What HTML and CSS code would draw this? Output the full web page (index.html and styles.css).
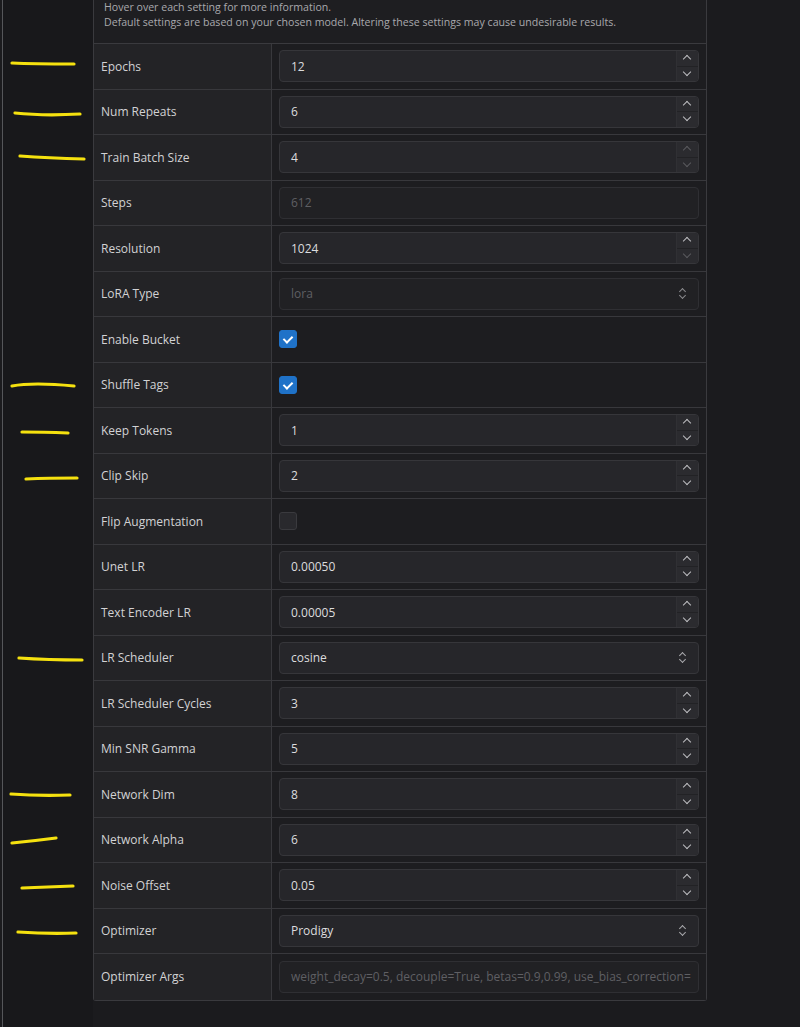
FILE: index.html
```html
<!DOCTYPE html>
<html lang="en">
<head>
    <meta charset="UTF-8">
    <title>Training Settings</title>
    <link rel="stylesheet" href="styles.css">
</head>
<body>
    <div class="page">
        <div class="gutter">
            <!-- hand drawn highlight marks -->
            <svg width="90" height="1027" viewBox="0 0 90 1027">
                <g fill="none" stroke="#f5e10f" stroke-width="3.2" stroke-linecap="round">
                    <path d="M9 63 Q30 64 71 64"/>
                    <path d="M12 113 Q40 116 77 114"/>
                    <path d="M17 156 Q45 158 81 159"/>
                    <path d="M9 386 Q30 382 71 386"/>
                    <path d="M19 432 Q40 432 65 433"/>
                    <path d="M23 479 Q45 478 74 478"/>
                    <path d="M16 658 Q45 660 79 660"/>
                    <path d="M8 794 Q35 796 67 795"/>
                    <path d="M9 843 Q30 841 53 838"/>
                    <path d="M19 888 Q45 887 70 886"/>
                    <path d="M15 932 Q45 934 73 933"/>
                </g>
            </svg>
        </div>
        <div class="panel">
            <div class="intro">
                <p>Hover over each setting for more information.</p>
                <p>Default settings are based on your chosen model. Altering these settings may cause undesirable results.</p>
            </div>
            <div class="rows">
                <div class="row">
                    <div class="label">Epochs</div>
                    <div class="value"><div class="field"><span class="text">12</span><div class="spin"><span class="up"></span><span class="down"></span></div></div></div>
                </div>
                <div class="row">
                    <div class="label">Num Repeats</div>
                    <div class="value"><div class="field"><span class="text">6</span><div class="spin"><span class="up"></span><span class="down"></span></div></div></div>
                </div>
                <div class="row">
                    <div class="label">Train Batch Size</div>
                    <div class="value"><div class="field"><span class="text">4</span><div class="spin"><span class="up dim"></span><span class="down dim"></span></div></div></div>
                </div>
                <div class="row">
                    <div class="label">Steps</div>
                    <div class="value"><div class="field disabled"><span class="text">612</span></div></div>
                </div>
                <div class="row">
                    <div class="label">Resolution</div>
                    <div class="value"><div class="field"><span class="text">1024</span><div class="spin"><span class="up"></span><span class="down dim"></span></div></div></div>
                </div>
                <div class="row">
                    <div class="label">LoRA Type</div>
                    <div class="value"><div class="field disabled select"><span class="text">lora</span><span class="caret"></span></div></div>
                </div>
                <div class="row">
                    <div class="label">Enable Bucket</div>
                    <div class="value"><span class="check on"></span></div>
                </div>
                <div class="row">
                    <div class="label">Shuffle Tags</div>
                    <div class="value"><span class="check on"></span></div>
                </div>
                <div class="row">
                    <div class="label">Keep Tokens</div>
                    <div class="value"><div class="field"><span class="text">1</span><div class="spin"><span class="up"></span><span class="down"></span></div></div></div>
                </div>
                <div class="row">
                    <div class="label">Clip Skip</div>
                    <div class="value"><div class="field"><span class="text">2</span><div class="spin"><span class="up"></span><span class="down"></span></div></div></div>
                </div>
                <div class="row">
                    <div class="label">Flip Augmentation</div>
                    <div class="value"><span class="check"></span></div>
                </div>
                <div class="row">
                    <div class="label">Unet LR</div>
                    <div class="value"><div class="field"><span class="text">0.00050</span><div class="spin"><span class="up"></span><span class="down"></span></div></div></div>
                </div>
                <div class="row">
                    <div class="label">Text Encoder LR</div>
                    <div class="value"><div class="field"><span class="text">0.00005</span><div class="spin"><span class="up"></span><span class="down"></span></div></div></div>
                </div>
                <div class="row">
                    <div class="label">LR Scheduler</div>
                    <div class="value"><div class="field select"><span class="text">cosine</span><span class="caret"></span></div></div>
                </div>
                <div class="row">
                    <div class="label">LR Scheduler Cycles</div>
                    <div class="value"><div class="field"><span class="text">3</span><div class="spin"><span class="up"></span><span class="down"></span></div></div></div>
                </div>
                <div class="row">
                    <div class="label">Min SNR Gamma</div>
                    <div class="value"><div class="field"><span class="text">5</span><div class="spin"><span class="up"></span><span class="down"></span></div></div></div>
                </div>
                <div class="row">
                    <div class="label">Network Dim</div>
                    <div class="value"><div class="field"><span class="text">8</span><div class="spin"><span class="up"></span><span class="down"></span></div></div></div>
                </div>
                <div class="row">
                    <div class="label">Network Alpha</div>
                    <div class="value"><div class="field"><span class="text">6</span><div class="spin"><span class="up"></span><span class="down"></span></div></div></div>
                </div>
                <div class="row">
                    <div class="label">Noise Offset</div>
                    <div class="value"><div class="field"><span class="text">0.05</span><div class="spin"><span class="up"></span><span class="down"></span></div></div></div>
                </div>
                <div class="row">
                    <div class="label">Optimizer</div>
                    <div class="value"><div class="field select"><span class="text">Prodigy</span><span class="caret"></span></div></div>
                </div>
                <div class="row">
                    <div class="label">Optimizer Args</div>
                    <div class="value"><div class="field disabled"><span class="text">weight_decay=0.5, decouple=True, betas=0.9,0.99, use_bias_correction=</span></div></div>
                </div>
            </div>
        </div>
        <div class="side"></div>
    </div>
</body>
</html>
```

FILE: styles.css
```css
body {
    margin: 0;
    background-color: #1b1b1e;
    font-family: "Open Sans", "Noto Sans", Arial, sans-serif;
    color: #d4d4d6;
}

.page {
    display: flex;
    height: 1027px;
    border-left: 1px solid #55565a;
    margin-left: 2px;
    overflow: hidden;
}

.gutter {
    width: 90px;
    flex-shrink: 0;
    background-color: #18181b;
}

.gutter svg {
    display: block;
}

.panel {
    width: 612px;
    flex-shrink: 0;
    align-self: flex-start;
    background-color: #1e1e21;
    border: 1px solid #3a3a3e;
    border-top: none;
    border-radius: 0 0 3px 3px;
}

.intro {
    height: 43px;
    padding: 0 10px;
    font-size: 10.6px;
    color: #a9a9ad;
}

.intro p {
    margin: 0;
    line-height: 15px;
}

.rows {
    border-top: 1px solid #3a3a3e;
}

.row {
    display: flex;
    height: 45.5px;
    box-sizing: border-box;
    border-bottom: 1px solid #38383c;
}

.row:last-child {
    border-bottom: none;
}

.label {
    width: 178px;
    flex-shrink: 0;
    display: flex;
    align-items: center;
    padding-left: 7px;
    box-sizing: border-box;
    background-color: #232326;
    border-right: 1px solid #38383c;
    font-size: 12px;
    color: #d2d2d4;
}

.value {
    flex: 1;
    min-width: 0;
    display: flex;
    align-items: center;
    padding: 0 7px;
    background-color: #1d1d20;
}

.field {
    flex: 1;
    min-width: 0;
    height: 32px;
    box-sizing: border-box;
    display: flex;
    align-items: center;
    background-color: #26262a;
    border: 1px solid #36363a;
    border-radius: 4px;
    font-size: 12px;
    color: #dcdcde;
    overflow: hidden;
}

.field .text {
    flex: 1;
    min-width: 0;
    padding-left: 11px;
    white-space: nowrap;
    overflow: hidden;
}

.field.disabled {
    background-color: #212124;
    border-color: #2f2f33;
    color: #5f5f63;
}

.spin {
    width: 21px;
    height: 30px;
    flex-shrink: 0;
    display: flex;
    flex-direction: column;
    border-left: 1px solid #303034;
}

.spin span {
    flex: 1;
    position: relative;
    background-color: #2b2b2f;
}

.spin .up {
    border-bottom: 1px solid #222225;
}

.spin span::after {
    content: "";
    position: absolute;
    left: 7px;
    width: 5px;
    height: 5px;
    border-left: 1.5px solid #bdbdc0;
    border-top: 1.5px solid #bdbdc0;
}

.spin .up::after {
    top: 5px;
    transform: rotate(45deg);
}

.spin .down::after {
    top: 2px;
    transform: rotate(225deg);
}

.spin .dim::after {
    border-color: #5a5a5e;
}

.select .caret {
    width: 8px;
    height: 12px;
    flex-shrink: 0;
    margin-right: 11px;
    position: relative;
}

.select .caret::before,
.select .caret::after {
    content: "";
    position: absolute;
    left: 1px;
    width: 4px;
    height: 4px;
    border-left: 1.3px solid #a9a9ac;
    border-top: 1.3px solid #a9a9ac;
}

.select .caret::before {
    top: 1px;
    transform: rotate(45deg);
}

.select .caret::after {
    top: 5px;
    transform: rotate(225deg);
}

.select.disabled .caret::before,
.select.disabled .caret::after {
    border-color: #8a8a8e;
}

.check {
    width: 18px;
    height: 18px;
    box-sizing: border-box;
    border-radius: 3px;
    background-color: #29292d;
    border: 1px solid #3a3a3e;
    position: relative;
}

.check.on {
    background-color: #1f72c8;
    border-color: #1f72c8;
}

.check.on::after {
    content: "";
    position: absolute;
    left: 5px;
    top: 3px;
    width: 4px;
    height: 7px;
    border-right: 2px solid #ffffff;
    border-bottom: 2px solid #ffffff;
    transform: rotate(45deg);
}

.side {
    flex: 1;
    background-color: #1b1b1e;
}
```
